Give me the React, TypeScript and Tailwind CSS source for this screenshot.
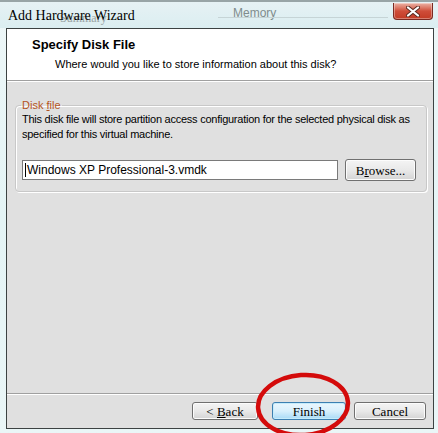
export default function App() {
  return (
    <div
      className="relative w-[438px] h-[433px] overflow-hidden bg-gradient-to-b from-[#eef7f8] via-[#e4f4f5] to-[#eaf6f7]"
      style={{ fontFamily: '"Liberation Sans", Arial, sans-serif' }}
    >
      {/* Title bar */}
      <div className="relative h-[28px] border-t-2 border-[#98a4a6] bg-gradient-to-b from-[#e6f1f4] to-[#dbeef1]">
        {/* window behind, shining through the glass */}
        <span className="absolute left-[233px] top-[2px] text-[12px] text-[#7f8c8c]">Memory</span>
        <div className="absolute left-[218px] right-[50px] top-[15px] h-px bg-[#c6d4d6]" />
        <span className="absolute left-[60px] top-[9px] text-[12px] leading-[14px] text-[#9aa4a4] font-['Liberation_Serif',serif]">Summary</span>

        <span className="absolute left-[8px] top-[3px] text-[14px] text-black font-['Liberation_Serif',serif]">
          Add Hardware Wizard
        </span>

        {/* close button */}
        <div className="absolute left-[393px] top-[1px] w-[40px] h-[17px] rounded-b-[4px] border border-t-0 border-[#7a2a22] bg-gradient-to-b from-[#eab2a6] via-[#cf4d39] to-[#c23a24] flex items-center justify-center shadow-[inset_0_0_0_1px_rgba(255,255,255,0.35)]">
          <svg width="14" height="11" viewBox="0 0 14 11">
            <path d="M2 1.5 L12 9.5 M12 1.5 L2 9.5" stroke="#5a2a20" strokeWidth="4" strokeLinecap="round" />
            <path d="M2 1.5 L12 9.5 M12 1.5 L2 9.5" stroke="#ffffff" strokeWidth="2.2" strokeLinecap="round" />
          </svg>
        </div>
      </div>

      {/* Client area */}
      <div className="ml-[6px] w-[428px] h-[401px] border border-[#3c4242] bg-[#e0e0e0] flex flex-col">
        {/* Header */}
        <div className="h-[52px] shrink-0 bg-white border-b border-[#a0a0a0] pt-[8px]">
          <div className="pl-[25px] text-[13px] font-bold leading-[16px] text-black">Specify Disk File</div>
          <div className="pl-[48px] mt-[4px] text-[11px] leading-[14px] text-black">
            Where would you like to store information about this disk?
          </div>
        </div>
        <div className="h-px bg-white shrink-0" />

        {/* Body */}
        <div className="flex-1 px-[8px] pr-[6px]">
          <fieldset className="mt-[16px] border border-[#c8c8c8] rounded-[4px] px-[6px] pb-[10px] shadow-[inset_1px_1px_0_#ffffff,1px_1px_0_#ffffff]">
            <legend className="ml-[-1px] px-px text-[11px] leading-[14px] text-[#b5541e]">
              Disk <span className="underline">f</span>ile
            </legend>
            <p className="text-[11px] leading-[15px] text-black tracking-[-0.25px]">
              This disk file will store partition access configuration for the selected physical disk as specified for this virtual machine.
            </p>
            <div className="mt-[17px] flex items-center">
              <div className="w-[316px] h-[20px] border border-[#7a7a7a] bg-white flex items-center pl-[2px] text-[12px] text-black">
                <span className="w-px h-[14px] bg-black mr-px" />
                <span>Windows XP Professional-3.vmdk</span>
              </div>
              <Button className="ml-[7px] w-[71px] h-[22px]">
                <span>
                  B<span className="underline">r</span>owse...
                </span>
              </Button>
            </div>
          </fieldset>
        </div>

        {/* Footer */}
        <div className="h-[35px] shrink-0 border-t border-[#a0a0a0]">
          <div className="h-full border-t border-white flex items-start pt-[7px] pl-[185px]">
            <Button className="w-[66px] h-[18px]">
              <span>
                &lt; <span className="underline">B</span>ack
              </span>
            </Button>
            <Button primary className="ml-[14px] w-[74px] h-[18px]">
              Finish
            </Button>
            <Button className="ml-[8px] w-[72px] h-[18px]">Cancel</Button>
          </div>
        </div>
      </div>

      {/* Red annotation circle */}
      <svg className="absolute left-0 top-0 pointer-events-none" width="438" height="433">
        <ellipse cx="303" cy="405" rx="45" ry="30" fill="none" stroke="#d40b0b" strokeWidth="4.5" transform="rotate(-4 303 405)" />
      </svg>
    </div>
  );
}

function Button({
  children,
  className = "",
  primary = false,
}: {
  children: React.ReactNode;
  className?: string;
  primary?: boolean;
}) {
  return (
    <div
      className={
        "flex items-center justify-center rounded-[3px] border text-[13px] leading-none text-black font-['Liberation_Serif',serif] " +
        (primary
          ? "border-[#3c7fb1] bg-gradient-to-b from-[#eaf6fd] via-[#d9f0fc] to-[#a9dbf6] shadow-[inset_0_0_0_1px_#c6ecfb] "
          : "border-[#707070] bg-gradient-to-b from-[#f4f4f4] via-[#e9e9e9] to-[#d4d4d4] shadow-[inset_0_0_0_1px_#fcfcfc] ") +
        className
      }
    >
      {children}
    </div>
  );
}
